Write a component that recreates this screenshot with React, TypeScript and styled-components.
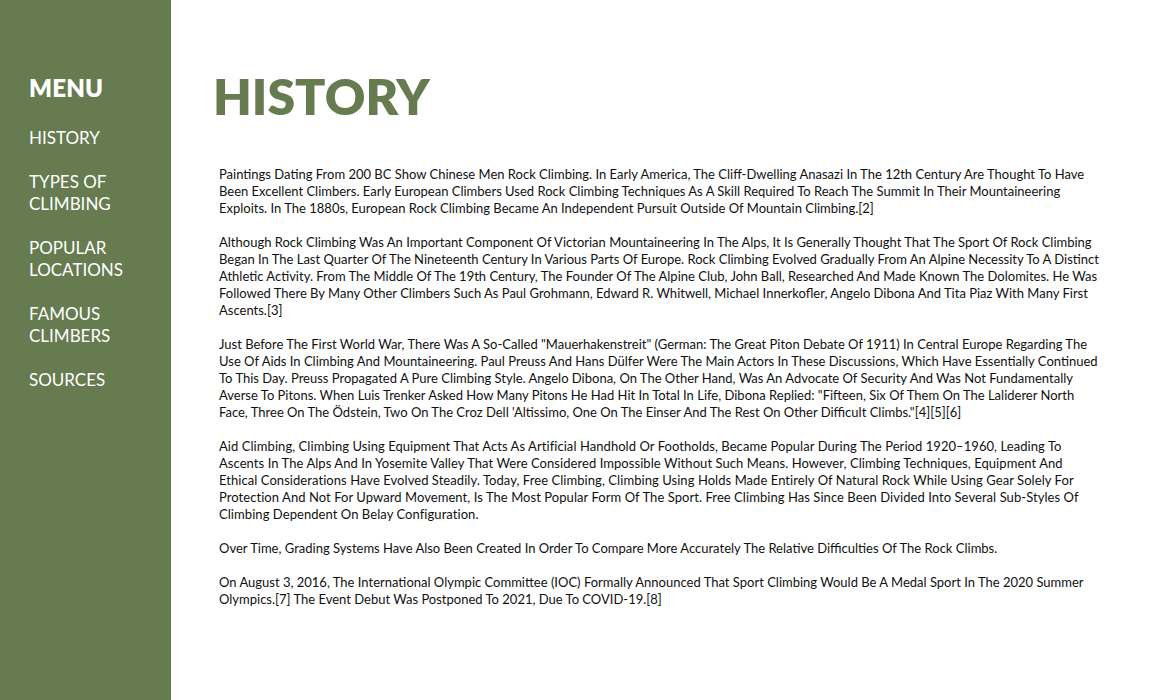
import React from "react";
import styled, { createGlobalStyle } from "styled-components";

const GREEN = "#667b4f";

const Global = createGlobalStyle`
  html, body { margin: 0; padding: 0; background: #fff; }
  body { font-family: "Lato", "Noto Sans", sans-serif; }
  * { box-sizing: border-box; }
`;

const Page = styled.div`
  display: flex;
  width: 1152px;
  min-height: 700px;
`;

const Sidebar = styled.nav`
  flex: 0 0 171px;
  background: ${GREEN};
  padding: 74px 0 0 29px;
  color: #fff;
`;

const MenuTitle = styled.h2`
  margin: 0 0 25px;
  font-size: 24px;
  line-height: 28px;
  font-weight: 800;
  letter-spacing: 0.2px;
`;

const MenuList = styled.ul`
  list-style: none;
  margin: 0;
  padding: 0;
  display: flex;
  flex-direction: column;
  gap: 22px;
`;

const MenuItem = styled.li`
  font-size: 17px;
  line-height: 22px;
  font-weight: 400;
  color: #fff;
  max-width: 110px;
`;

const Main = styled.main`
  flex: 1;
  padding: 66px 52px 40px 48px;
`;

const Heading = styled.h1`
  margin: 0 0 40px -6px;
  font-size: 50px;
  line-height: 60px;
  font-weight: 800;
  color: ${GREEN};
`;

const Para = styled.p<{ $tracking?: number }>`
  margin: 0 0 17px;
  font-size: 13px;
  line-height: 17px;
  letter-spacing: ${(p) => p.$tracking ?? 0}px;
  color: #111;
  text-transform: capitalize;
`;

const items = ["HISTORY", "TYPES OF CLIMBING", "POPULAR LOCATIONS", "FAMOUS CLIMBERS", "SOURCES"];

const paras: { text: string; tracking?: number }[] = [
  { text: "Paintings Dating From 200 BC Show Chinese Men Rock Climbing. In Early America, The Cliff-Dwelling Anasazi In The 12th Century Are Thought To Have Been Excellent Climbers. Early European Climbers Used Rock Climbing Techniques As A Skill Required To Reach The Summit In Their Mountaineering Exploits. In The 1880s, European Rock Climbing Became An Independent Pursuit Outside Of Mountain Climbing.[2]" },
  { text: "Although Rock Climbing Was An Important Component Of Victorian Mountaineering In The Alps, It Is Generally Thought That The Sport Of Rock Climbing Began In The Last Quarter Of The Nineteenth Century In Various Parts Of Europe. Rock Climbing Evolved Gradually From An Alpine Necessity To A Distinct Athletic Activity. From The Middle Of The 19th Century, The Founder Of The Alpine Club, John Ball, Researched And Made Known The Dolomites. He Was Followed There By Many Other Climbers Such As Paul Grohmann, Edward R. Whitwell, Michael Innerkofler, Angelo Dibona And Tita Piaz With Many First Ascents.[3]" },
  { text: "Just Before The First World War, There Was A So-Called \"Mauerhakenstreit\" (German: The Great Piton Debate Of 1911) In Central Europe Regarding The Use Of Aids In Climbing And Mountaineering. Paul Preuss And Hans Dülfer Were The Main Actors In These Discussions, Which Have Essentially Continued To This Day. Preuss Propagated A Pure Climbing Style. Angelo Dibona, On The Other Hand, Was An Advocate Of Security And Was Not Fundamentally Averse To Pitons. When Luis Trenker Asked How Many Pitons He Had Hit In Total In Life, Dibona Replied: \"Fifteen, Six Of Them On The Laliderer North Face, Three On The Ödstein, Two On The Croz Dell 'Altissimo, One On The Einser And The Rest On Other Difficult Climbs.\"[4][5][6]" },
  { text: "Aid Climbing, Climbing Using Equipment That Acts As Artificial Handhold Or Footholds, Became Popular During The Period 1920–1960, Leading To Ascents In The Alps And In Yosemite Valley That Were Considered Impossible Without Such Means. However, Climbing Techniques, Equipment And Ethical Considerations Have Evolved Steadily. Today, Free Climbing, Climbing Using Holds Made Entirely Of Natural Rock While Using Gear Solely For Protection And Not For Upward Movement, Is The Most Popular Form Of The Sport. Free Climbing Has Since Been Divided Into Several Sub-Styles Of Climbing Dependent On Belay Configuration.", tracking: 0.06 },
  { text: "Over Time, Grading Systems Have Also Been Created In Order To Compare More Accurately The Relative Difficulties Of The Rock Climbs." },
  { text: "On August 3, 2016, The International Olympic Committee (IOC) Formally Announced That Sport Climbing Would Be A Medal Sport In The 2020 Summer Olympics.[7] The Event Debut Was Postponed To 2021, Due To COVID-19.[8]" },
];

export default function App() {
  return (
    <>
      <Global />
      <Page>
        <Sidebar>
          <MenuTitle>MENU</MenuTitle>
          <MenuList>
            {items.map((i) => (
              <MenuItem key={i}>{i}</MenuItem>
            ))}
          </MenuList>
        </Sidebar>
        <Main>
          <Heading>HISTORY</Heading>
          {paras.map((p, i) => (
            <Para key={i} $tracking={p.tracking}>
              {p.text}
            </Para>
          ))}
        </Main>
      </Page>
    </>
  );
}
